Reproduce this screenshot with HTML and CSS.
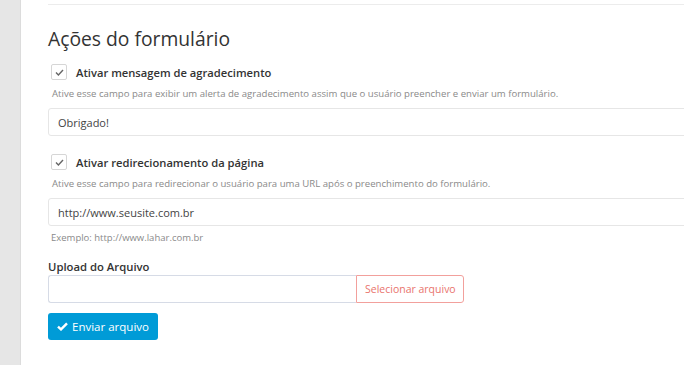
FILE: index.html
```html
<!DOCTYPE html>
<html lang="pt-BR">
<head>
    <meta charset="UTF-8">
    <title>Ações do formulário</title>
    <link rel="stylesheet" href="styles.css">
</head>
<body>
    <div class="sidebar"></div>
    <div class="content">
        <hr class="divider">
        <h2>Ações do formulário</h2>

        <div class="check-group">
            <label class="check">
                <span class="box">
                    <svg width="9" height="7" viewBox="0 0 9 7"><path d="M1 3.6 L3.4 6 L8 1" fill="none" stroke="#666" stroke-width="1.4"/></svg>
                </span>
                Ativar mensagem de agradecimento
            </label>
            <p class="help">Ative esse campo para exibir um alerta de agradecimento assim que o usuário preencher e enviar um formulário.</p>
            <input type="text" class="field" value="Obrigado!">
        </div>

        <div class="check-group">
            <label class="check">
                <span class="box">
                    <svg width="9" height="7" viewBox="0 0 9 7"><path d="M1 3.6 L3.4 6 L8 1" fill="none" stroke="#666" stroke-width="1.4"/></svg>
                </span>
                Ativar redirecionamento da página
            </label>
            <p class="help">Ative esse campo para redirecionar o usuário para uma URL após o preenchimento do formulário.</p>
            <input type="text" class="field" value="http://www.seusite.com.br">
            <p class="example">Exemplo: http://www.lahar.com.br</p>
        </div>

        <div class="upload">
            <label class="upload-label">Upload do Arquivo</label>
            <div class="file-row">
                <div class="file-name"></div>
                <button class="file-btn">Selecionar arquivo</button>
            </div>
            <button class="send-btn">
                <svg width="11" height="9" viewBox="0 0 11 9"><path d="M1 4.6 L4 7.4 L10 1.4" fill="none" stroke="#fff" stroke-width="2.4"/></svg>
                Enviar arquivo
            </button>
        </div>
    </div>
</body>
</html>
```

FILE: styles.css
```css
html, body {
    margin: 0;
    height: 100%;
}
body {
    font-family: "Open Sans", "Liberation Sans", sans-serif;
    color: #333;
    background-color: #fff;
    display: flex;
    overflow: hidden;
}
.sidebar {
    width: 20px;
    flex-shrink: 0;
    background-color: #e6e6e6;
    border-right: 1px solid #dcdcdc;
}
.content {
    flex-grow: 1;
    min-width: 0;
    padding: 4px 0 0 27px;
    overflow: hidden;
}
.divider {
    border: none;
    border-top: 1px solid #ececec;
    margin: 0;
}
h2 {
    font-size: 19.3px;
    font-weight: 400;
    margin: 20px 0 0;
    line-height: 28px;
    color: #333;
}
.check-group {
    margin-top: 11px;
}
.check-group + .check-group {
    margin-top: 18px;
}
.check {
    display: flex;
    align-items: center;
    font-size: 11.2px;
    font-weight: 600;
    height: 16px;
    padding-left: 3px;
}
.box {
    width: 14px;
    height: 14px;
    border: 1px solid #d6d6d6;
    border-radius: 2px;
    display: flex;
    align-items: center;
    justify-content: center;
    margin-right: 9px;
    background-color: #fff;
}
.help {
    font-size: 9.6px;
    color: #8a8a8a;
    margin: 7px 0 0 4px;
    line-height: 14px;
}
.field {
    display: block;
    box-sizing: border-box;
    width: calc(100% + 40px);
    height: 28px;
    margin-top: 7px;
    border: 1px solid #e6e6e6;
    border-radius: 3px;
    padding: 0 9px;
    font-family: inherit;
    font-size: 11px;
    color: #444;
}
.example {
    font-size: 9.5px;
    color: #8a8a8a;
    margin: 5px 0 0 3px;
    line-height: 14px;
}
.upload {
    margin-top: 14px;
}
.upload-label {
    display: block;
    font-size: 11.3px;
    font-weight: 600;
    line-height: 16px;
    color: #333;
}
.file-row {
    display: flex;
    margin-top: 0;
    height: 28px;
}
.file-name {
    width: 307px;
    border: 1px solid #d6dbe6;
    border-right: none;
    border-radius: 3px 0 0 3px;
}
.file-btn {
    border: 1px solid #f2a09c;
    border-radius: 0 3px 3px 0;
    background-color: #fff;
    color: #e9746d;
    font-family: inherit;
    font-size: 10.5px;
    white-space: nowrap;
    padding: 0 8px;
    width: 108px;
}
.send-btn {
    margin-top: 10px;
    height: 27px;
    width: 110px;
    border: none;
    border-radius: 3px;
    background-color: #009bd7;
    color: #fff;
    font-family: inherit;
    font-size: 11.5px;
    display: flex;
    align-items: center;
    justify-content: center;
    gap: 4px;
    padding: 0;
}
```
